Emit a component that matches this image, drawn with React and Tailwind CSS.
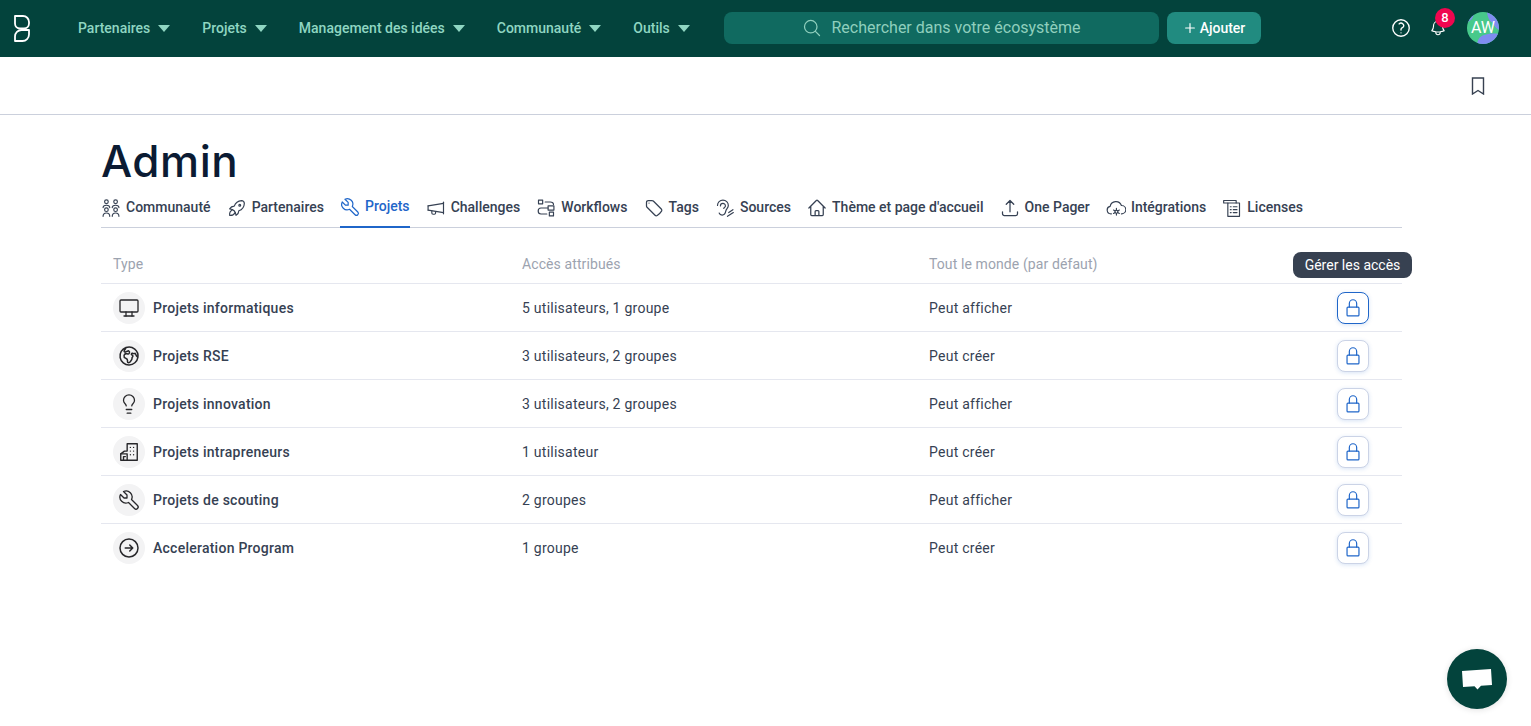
import {
  HiOutlineArrowRightCircle,
  HiOutlineArrowUpTray,
  HiOutlineBell,
  HiOutlineGlobeEuropeAfrica,
  HiOutlineHome,
  HiOutlineMagnifyingGlass,
  HiOutlinePlus,
  HiOutlineQuestionMarkCircle,
  HiOutlineTag,
} from "react-icons/hi2";
import { LuLightbulb } from "react-icons/lu";
import { TbDeviceDesktop, TbRocket, TbTool } from "react-icons/tb";

const Stroke = ({ children, className = "w-5 h-5", width = "1.4" }) => (
  <svg viewBox="0 0 24 24" fill="none" stroke="currentColor" strokeWidth={width} strokeLinecap="round" strokeLinejoin="round" className={className}>
    {children}
  </svg>
);

const PeopleIcon = () => (
  <Stroke>
    <circle cx="6.500" cy="4.500" r="2.200" />
    <circle cx="17.500" cy="4.500" r="2.200" />
    <circle cx="6.500" cy="14" r="2.200" />
    <circle cx="17.500" cy="14" r="2.200" />
    <path d="M2.500 11.500c0-1.600 1.800-2.800 4-2.800s4 1.200 4 2.800M13.500 11.500c0-1.600 1.800-2.800 4-2.800s4 1.200 4 2.800" />
    <path d="M2.500 22c0-2.400 1.800-4 4-4s4 1.600 4 4M13.500 22c0-2.400 1.800-4 4-4s4 1.600 4 4" />
  </Stroke>
);

const MegaphoneIcon = () => (
  <Stroke>
    <path d="M21 5v14" />
    <path d="M2.500 9.500 21 6.500M2.500 14.500 21 17.500" />
    <path d="M2.500 9.500v5" />
    <path d="M7 15.500v2.500a1.500 1.500 0 0 0 1.500 1.500H10a1.500 1.500 0 0 0 1.500-1.500v-1.500" />
  </Stroke>
);

const WorkflowIcon = () => (
  <Stroke>
    <rect x="3" y="2.500" width="5" height="4.500" />
    <rect x="16" y="17" width="5" height="4.500" />
    <rect x="14.500" y="9.500" width="7" height="5" />
    <path d="M11 4.800h6c3 0 4 1.500 4 3M14.500 12H6c-4.500 0-4.500 7.200 0 7.200h7" />
  </Stroke>
);

const EarIcon = () => (
  <Stroke>
    <path d="M3 9a6.500 6.500 0 0 1 13 0c0 3-2.500 4-3 6.500-.4 2.500-1.700 5-4.500 5-1.700 0-3-1-3.500-2.500" />
    <path d="M6.500 9.500a3 3 0 0 1 6 0c0 1.500-1.500 1.800-2 3" />
    <path d="M16.500 17.500l5-3.500M15 22l7-4.500" />
  </Stroke>
);

const CloudGearIcon = () => (
  <Stroke>
    <path d="M6.500 19H6a4.500 4.500 0 0 1-1-8.900A7 7 0 0 1 18.500 9a5 5 0 0 1 .5 10h-.5" />
    <circle cx="12.500" cy="16.500" r="1.800" />
    <path d="M12.500 12.500v2.200M12.500 18.300v2.200M9 14.500l2 1.100M14 17.400l2 1.100M9 18.500l2-1.100M14 15.600l2-1.100" />
  </Stroke>
);

const LicenseIcon = () => (
  <Stroke>
    <path d="M2 3h15v3M2 3v3h5" />
    <path d="M7 6h14v16H7z" />
    <path d="M10 10.500h1M13.500 10.500H18M10 14h1M13.500 14H18M10 17.500h1M13.500 17.500H18" />
  </Stroke>
);

const BuildingIcon = ({ className }) => (
  <Stroke className={className} width="1.500">
    <path d="M10 11V3h11v18H3v-7l4-3h3" />
    <path d="M3 14h7v7M6 21v-4h2" />
    <path d="M13.500 7h.01M17 7h.01M13.500 11h.01M17 11h.01M13.500 15h.01M17 15h.01" />
  </Stroke>
);

const LockIcon = () => (
  <Stroke className="w-[22px] h-[22px]" width="1.300">
    <rect x="5.500" y="11" width="13" height="9.500" rx="1" />
    <path d="M8 11V7a4 4 0 0 1 8 0v4" />
  </Stroke>
);

const BookmarkIcon = () => (
  <svg viewBox="0 0 14 18" fill="none" stroke="#374151" strokeWidth="1.400" className="w-[14px] h-[18px]">
    <path d="M1.500 1h11v16L7 13.500 1.500 17z" />
  </svg>
);

const Logo = () => (
  <svg viewBox="0 0 16 27" fill="none" stroke="white" strokeWidth="1.800" strokeLinejoin="round" className="w-4 h-[27px]">
    <path d="M1 1h8a6 6 0 0 1 6 6v1.500a5 5 0 0 1-5 5H6a5 5 0 0 1-5-5z" />
    <path d="M1 26v-4.500a6.500 6.500 0 0 1 6.500-6.500H15v4.500A6.500 6.500 0 0 1 8.500 26z" />
  </svg>
);

const Avatar = () => (
  <div className="relative ml-[20px] w-8 h-8 rounded-full overflow-hidden bg-[#47c98b] text-white text-[16px] flex items-center justify-center">
    <svg viewBox="0 0 32 32" className="absolute inset-0 w-8 h-8" fill="#7f8cf0">
      <path d="M20 0h12v18c-3-2-5-4-6-7-2-1-5-3-6-11z" />
      <path d="M0 0h8L5 7 0 11z" />
      <path d="M10 32c1-5 3-8 7-9 4-1 7-2 15-1v10z" />
    </svg>
    <span className="relative">AW</span>
  </div>
);

const navItems = [
  { label: "Partenaires" },
  { label: "Projets" },
  { label: "Management des idées" },
  { label: "Communauté" },
  { label: "Outils" },
];

const tabs = [
  { label: "Communauté", icon: <PeopleIcon /> },
  { label: "Partenaires", icon: <TbRocket className="w-[22px] h-[22px] -mx-px" strokeWidth={1.3} /> },
  { label: "Projets", icon: <TbTool className="w-[22px] h-[22px] -mx-px" strokeWidth={1.3} />, active: true },
  { label: "Challenges", icon: <MegaphoneIcon /> },
  { label: "Workflows", icon: <WorkflowIcon /> },
  { label: "Tags", icon: <HiOutlineTag className="w-5 h-5" /> },
  { label: "Sources", icon: <EarIcon /> },
  { label: "Thème et page d'accueil", icon: <HiOutlineHome className="w-5 h-5" /> },
  { label: "One Pager", icon: <HiOutlineArrowUpTray className="w-5 h-5" /> },
  { label: "Intégrations", icon: <CloudGearIcon /> },
  { label: "Licenses", icon: <LicenseIcon /> },
];

const rows = [
  { name: "Projets informatiques", access: "5 utilisateurs, 1 groupe", def: "Peut afficher", icon: <TbDeviceDesktop className="w-6 h-6" strokeWidth={1.3} />, focus: true },
  { name: "Projets RSE", access: "3 utilisateurs, 2 groupes", def: "Peut créer", icon: <HiOutlineGlobeEuropeAfrica className="w-6 h-6" /> },
  { name: "Projets innovation", access: "3 utilisateurs, 2 groupes", def: "Peut afficher", icon: <LuLightbulb className="w-[22px] h-[22px]" strokeWidth={1.4} /> },
  { name: "Projets intrapreneurs", access: "1 utilisateur", def: "Peut créer", icon: <BuildingIcon className="w-[22px] h-[22px]" /> },
  { name: "Projets de scouting", access: "2 groupes", def: "Peut afficher", icon: <TbTool className="w-6 h-6" strokeWidth={1.3} /> },
  { name: "Acceleration Program", access: "1 groupe", def: "Peut créer", icon: <HiOutlineArrowRightCircle className="w-6 h-6" /> },
];

export default function App() {
  return (
    <div className="relative h-[726px] overflow-hidden bg-white font-['Roboto',sans-serif] text-[14px]">

      {/* Topbar */}
      <div className="h-[57px] bg-[#03433c] flex items-center pb-px">
        <div className="ml-[14px] w-[64px] flex items-center">
          <Logo />
        </div>
        <div className="flex items-center gap-8 w-[646px]">
          {navItems.map((item) => (
            <div key={item.label} className="flex items-center gap-2 text-[#8fd6c2] font-medium">
              {item.label}
              <span className="w-0 h-0 border-x-[6px] border-x-transparent border-t-[7px] border-t-[#8fd6c2]" />
            </div>
          ))}
        </div>
        <div className="w-[435px] h-8 rounded-lg bg-[#106a60] flex items-center justify-center gap-[9px] text-[16px] text-[#8fcfbd]">
          <HiOutlineMagnifyingGlass className="w-5 h-5" />
          Rechercher dans votre écosystème
        </div>
        <div className="ml-2 w-[94px] h-8 rounded-lg bg-[#218b80] flex items-center justify-center gap-[3px] text-white font-medium">
          <HiOutlinePlus className="w-3.5 h-3.5 text-white" strokeWidth={2} />
          Ajouter
        </div>
        <HiOutlineQuestionMarkCircle className="ml-[129px] w-[22px] h-[22px] text-white" />
        <div className="relative ml-[17px] w-[18px] flex">
          <HiOutlineBell className="w-5 h-5 text-white" />
          <span className="absolute left-[6px] -top-[10px] w-[20px] h-[20px] rounded-full bg-[#f0064f] text-white text-[13px] font-medium flex items-center justify-center">8</span>
        </div>
        <Avatar />
      </div>

      {/* Sub bar */}
      <div className="h-[58px] border-b border-[#cbd0dc] flex items-center justify-end pr-[46px] pt-px">
        <BookmarkIcon />
      </div>

      <div className="mx-[101px] w-[1301px]">
        <h1 className="mt-[19px] h-[55px] font-['Inter',sans-serif] text-[44px] leading-[55px] font-medium text-[#0b1b33] tracking-[0.5px]">Admin</h1>

        {/* Tabs */}
        <div className="flex gap-[16.100px] border-b border-[#cbd0dc] h-[39px]">
          {tabs.map((tab) => (
            <div
              key={tab.label}
              className={`flex items-center gap-[5px] h-[39px] pb-[2px] font-medium whitespace-nowrap ${tab.active ? "text-[#1f66c9] border-b-2 border-[#1f66c9]" : "text-[#364153]"}`}
            >
              {tab.icon}
              {tab.label}
            </div>
          ))}
        </div>

        {/* Table */}
        <div className="grid grid-cols-[409px_407px_1fr] h-[56px] items-center pl-3 pt-[17px] text-[#9ca3af] tracking-[0.1px] border-b border-[#e5e7ef]">
          <div>Type</div>
          <div>Accès attribués</div>
          <div>Tout le monde (par défaut)</div>
        </div>
        {rows.map((row) => (
          <div key={row.name} className="grid grid-cols-[409px_407px_1fr_32px] h-[48px] items-center pl-3 pr-[33px] border-b border-[#e5e7ef] last:border-b-transparent text-[#364153] tracking-[0.25px]">
            <div className="flex items-center gap-2 font-medium">
              <span className="w-8 h-8 rounded-full bg-[#f3f3f4] flex items-center justify-center text-[#27272a]">
                {row.icon}
              </span>
              <span className="pt-px">{row.name}</span>
            </div>
            <div className="pt-px">{row.access}</div>
            <div className="pt-px">{row.def}</div>
            <div className={`w-8 h-8 rounded-lg bg-white border flex items-center justify-center text-[#1f66c9] shadow-[0_1px_4px_rgba(31,102,201,0.18)] ${row.focus ? "border-[#1f66c9]" : "border-[#cbd3e6]"}`}>
              <LockIcon />
            </div>
          </div>
        ))}
      </div>

      {/* Tooltip */}
      <div className="absolute left-[1293px] top-[252px] w-[119px] h-[26px] rounded-lg bg-[#374151] text-white text-[14px] flex items-center justify-center">
        Gérer les accès
      </div>

      {/* Chat */}
      <div className="absolute left-[1447px] top-[649px] w-[60px] h-[60px] rounded-full bg-[#03433c] shadow-[0_1px_6px_rgba(0,0,0,0.12)] flex items-center justify-center">
        <svg viewBox="0 0 32 24" className="w-8 h-6" fill="white">
          <path d="M1 4l29-2 1 16-11 .8-3.500 3.700-3-3.300L2 20z" />
        </svg>
      </div>
    </div>
  );
}
